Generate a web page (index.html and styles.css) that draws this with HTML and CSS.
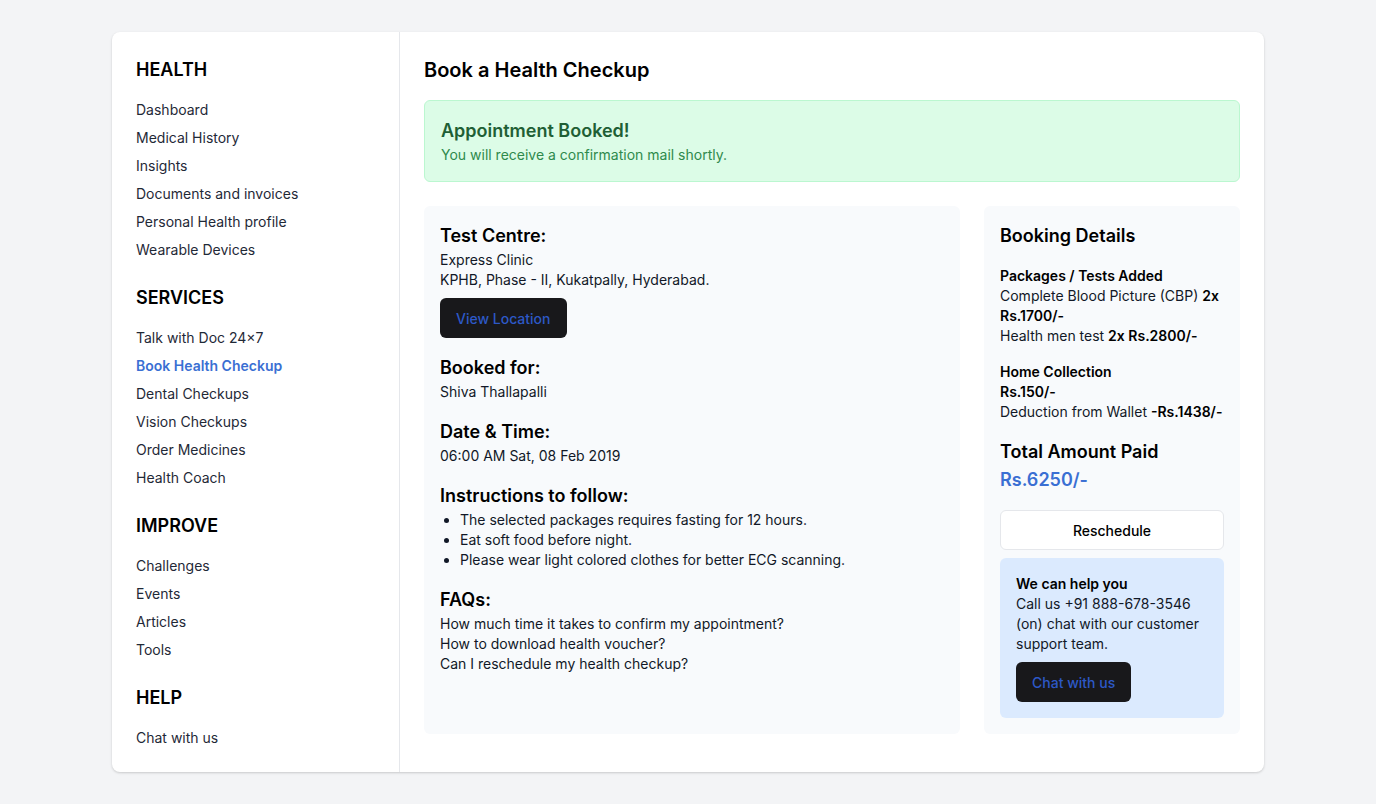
FILE: index.html
```html
<!DOCTYPE html>
<html lang="en">
<head>
<meta charset="utf-8">
<title>Book a Health Checkup</title>
<link rel="stylesheet" href="styles.css">
</head>
<body>
<div class="page">
  <div class="card">
    <aside class="sidebar">
      <section class="nav-section">
        <h2 class="nav-title">HEALTH</h2>
        <ul class="nav-list">
          <li>Dashboard</li>
          <li>Medical History</li>
          <li>Insights</li>
          <li>Documents and invoices</li>
          <li>Personal Health profile</li>
          <li>Wearable Devices</li>
        </ul>
      </section>
      <section class="nav-section">
        <h2 class="nav-title">SERVICES</h2>
        <ul class="nav-list">
          <li>Talk with Doc 24×7</li>
          <li class="active">Book Health Checkup</li>
          <li>Dental Checkups</li>
          <li>Vision Checkups</li>
          <li>Order Medicines</li>
          <li>Health Coach</li>
        </ul>
      </section>
      <section class="nav-section">
        <h2 class="nav-title">IMPROVE</h2>
        <ul class="nav-list">
          <li>Challenges</li>
          <li>Events</li>
          <li>Articles</li>
          <li>Tools</li>
        </ul>
      </section>
      <section class="nav-section">
        <h2 class="nav-title">HELP</h2>
        <ul class="nav-list">
          <li>Chat with us</li>
        </ul>
      </section>
    </aside>
    <main class="main">
      <h1 class="page-title">Book a Health Checkup</h1>
      <div class="alert">
        <div class="alert-title">Appointment Booked!</div>
        <div class="alert-text">You will receive a confirmation mail shortly.</div>
      </div>
      <div class="grid">
        <div class="panel panel-left">
          <div class="block">
            <h3 class="block-title">Test Centre:</h3>
            <p>Express Clinic</p>
            <p>KPHB, Phase - II, Kukatpally, Hyderabad.</p>
            <button class="btn-dark btn-mt">View Location</button>
          </div>
          <div class="block">
            <h3 class="block-title">Booked for:</h3>
            <p>Shiva Thallapalli</p>
          </div>
          <div class="block">
            <h3 class="block-title">Date &amp; Time:</h3>
            <p>06:00 AM Sat, 08 Feb 2019</p>
          </div>
          <div class="block">
            <h3 class="block-title">Instructions to follow:</h3>
            <ul class="bullets">
              <li>The selected packages requires fasting for 12 hours.</li>
              <li>Eat soft food before night.</li>
              <li>Please wear light colored clothes for better ECG scanning.</li>
            </ul>
          </div>
          <div class="block">
            <h3 class="block-title">FAQs:</h3>
            <p>How much time it takes to confirm my appointment?</p>
            <p>How to download health voucher?</p>
            <p>Can I reschedule my health checkup?</p>
          </div>
        </div>
        <div class="panel panel-right">
          <h3 class="block-title">Booking Details</h3>
          <div class="detail">
            <p class="strong">Packages / Tests Added</p>
            <p>Complete Blood Picture (CBP) <b>2x</b></p>
            <p class="strong">Rs.1700/-</p>
            <p>Health men test <b>2x Rs.2800/-</b></p>
          </div>
          <div class="detail">
            <p class="strong">Home Collection</p>
            <p class="strong">Rs.150/-</p>
            <p>Deduction from Wallet <b>-Rs.1438/-</b></p>
          </div>
          <div class="detail">
            <h3 class="block-title">Total Amount Paid</h3>
            <div class="amount">Rs.6250/-</div>
          </div>
          <button class="btn-outline">Reschedule</button>
          <div class="help">
            <p class="strong">We can help you</p>
            <p>Call us +91 888-678-3546 (on) chat with our customer support team.</p>
            <button class="btn-dark btn-mt">Chat with us</button>
          </div>
        </div>
      </div>
    </main>
  </div>
</div>
</body>
</html>
```
FILE: styles.css
```css
* { box-sizing: border-box; }
html, body { margin: 0; padding: 0; }
body {
  background: #f3f4f6;
  font-family: Inter, "Noto Sans", "Liberation Sans", sans-serif;
  color: #111827;
  font-size: 14px;
  line-height: 20px;
}
p, h1, h2, h3, ul { margin: 0; padding: 0; }
.page { padding: 32px 112px; }
.card {
  display: flex;
  background: #fff;
  border-radius: 8px;
  box-shadow: 0 1px 3px rgba(0,0,0,0.12), 0 1px 2px rgba(0,0,0,0.06);
  min-height: 740px;
}
.sidebar {
  width: 288px;
  flex: none;
  border-right: 1px solid #e5e7eb;
  padding: 24px;
  display: flex;
  flex-direction: column;
  gap: 24px;
}
.nav-title {
  font-size: 18px;
  line-height: 28px;
  font-weight: 600;
  color: #000;
  margin-bottom: 16px;
}
.nav-list { list-style: none; display: flex; flex-direction: column; gap: 8px; color: #1f2937; }
.nav-list .active { color: #3a6fd3; font-weight: 600; }
.main { flex: 1; padding: 24px; }
.page-title {
  font-size: 20px;
  line-height: 28px;
  font-weight: 600;
  color: #000;
  margin-bottom: 16px;
}
.alert {
  background: #dcfce7;
  border: 1px solid #bbf7d0;
  border-radius: 6px;
  padding: 16px;
  margin-bottom: 24px;
}
.alert-title { font-size: 18px; line-height: 28px; font-weight: 600; color: #1f5f35; }
.alert-text { color: #2f8a4c; }
.grid {
  display: grid;
  grid-template-columns: 1fr 256px;
  gap: 24px;
  align-items: start;
}
.panel {
  background: #f8fafc;
  border-radius: 6px;
  padding: 16px;
}
.panel-left { align-self: stretch; display: flex; flex-direction: column; gap: 16px; }
.block-title { font-size: 18px; line-height: 28px; font-weight: 600; color: #000; }
.btn-dark {
  display: inline-block;
  background: #18181b;
  color: #2d58c7;
  border: none;
  border-radius: 6px;
  height: 40px;
  padding: 0 16px;
  font-family: inherit;
  font-size: 14px;
  font-weight: 500;
}
.btn-mt { margin-top: 8px; }
.bullets { padding-left: 20px; }
.panel-right .block-title { margin-bottom: 0; }
.detail { margin-top: 16px; }
.strong, b { font-weight: 600; color: #000; }
.amount { font-size: 18px; line-height: 28px; font-weight: 600; color: #3a6fd3; }
.btn-outline {
  display: block;
  width: 100%;
  margin-top: 16px;
  height: 40px;
  background: #fff;
  border: 1px solid #e5e7eb;
  border-radius: 6px;
  font-family: inherit;
  font-size: 14px;
  font-weight: 500;
  color: #000;
}
.help {
  margin-top: 8px;
  background: #dbeafe;
  border-radius: 6px;
  padding: 16px;
}
```
